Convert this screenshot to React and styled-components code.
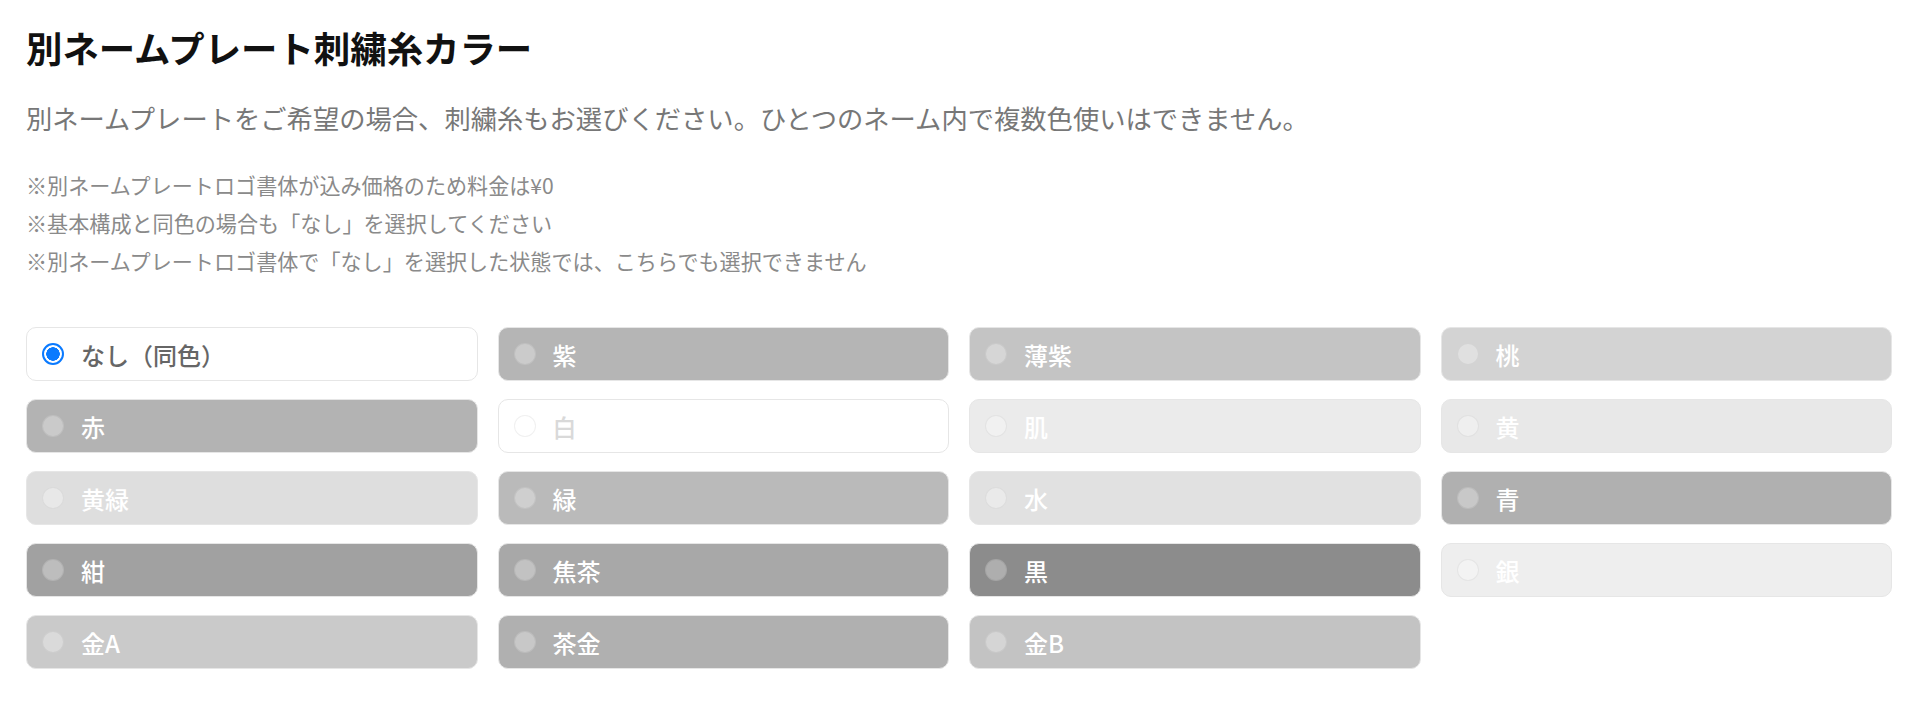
import styled, { createGlobalStyle } from "styled-components";

const GlobalStyle = createGlobalStyle`
  body {
    margin: 0;
    background: #fff;
    font-family: "Noto Sans CJK JP", "Noto Sans", sans-serif;
  }
`;

const Page = styled.div`
  padding: 22px 28px 30px 26px;
`;

const Title = styled.h2`
  margin: 0;
  font-size: 36.4px;
  line-height: 50px;
  font-weight: 700;
  color: #111;
`;

const Lead = styled.p`
  margin: 26px 0 0;
  font-size: 26.3px;
  line-height: 40px;
  color: #777;
`;

const Notes = styled.div`
  margin-top: 28px;
  font-size: 21.1px;
  line-height: 38px;
  color: #8a8a8a;
`;

const Grid = styled.div`
  margin-top: 47px;
  display: grid;
  grid-template-columns: repeat(4, 1fr);
  column-gap: 20px;
  row-gap: 18px;
`;

const Option = styled.label`
  height: 54px;
  box-sizing: border-box;
  display: flex;
  align-items: center;
  gap: 17px;
  padding-left: 15px;
  border: 1px solid #e6e6e6;
  border-radius: 10px;
  background: ${(p) => p.$bg};
  color: ${(p) => p.$fg};
  font-size: 24px;
  font-weight: 500;
`;

const Dot = styled.span`
  width: 22px;
  height: 22px;
  box-sizing: border-box;
  border-radius: 50%;
  flex: none;
  background: rgba(255, 255, 255, 0.3);
  border: 1px solid rgba(0, 0, 0, 0.06);
`;

const Checked = styled.span`
  width: 22px;
  height: 22px;
  box-sizing: border-box;
  border-radius: 50%;
  flex: none;
  border: 2px solid #0a7aff;
  background: radial-gradient(circle, #0a7aff 0 6.5px, #fff 7px);
`;

const options = [
  { name: "なし（同色）", bg: "#fff", fg: "#666", selected: true },
  { name: "紫", bg: "#b5b5b5" },
  { name: "薄紫", bg: "#c4c4c4" },
  { name: "桃", bg: "#d3d3d3" },
  { name: "赤", bg: "#b3b3b3" },
  { name: "白", bg: "#fff", fg: "#d9d9d9" },
  { name: "肌", bg: "#ebebeb" },
  { name: "黄", bg: "#e8e8e8" },
  { name: "黄緑", bg: "#dedede" },
  { name: "緑", bg: "#bababa" },
  { name: "水", bg: "#e1e1e1" },
  { name: "青", bg: "#b0b0b0" },
  { name: "紺", bg: "#a1a1a1" },
  { name: "焦茶", bg: "#a8a8a8" },
  { name: "黒", bg: "#8c8c8c" },
  { name: "銀", bg: "#eeeeee" },
  { name: "金A", bg: "#cacaca" },
  { name: "茶金", bg: "#b0b0b0" },
  { name: "金B", bg: "#c3c3c3" },
];

export default function App() {
  return (
    <Page>
      <GlobalStyle />
      <Title>別ネームプレート刺繍糸カラー</Title>
      <Lead>
        別ネームプレートをご希望の場合、刺繍糸もお選びください。ひとつのネーム内で複数色使いはできません。
      </Lead>
      <Notes>
        <div>※別ネームプレートロゴ書体が込み価格のため料金は¥0</div>
        <div>※基本構成と同色の場合も「なし」を選択してください</div>
        <div>※別ネームプレートロゴ書体で「なし」を選択した状態では、こちらでも選択できません</div>
      </Notes>
      <Grid>
        {options.map((o) => (
          <Option key={o.name} $bg={o.bg} $fg={o.fg || "#fff"}>
            {o.selected ? <Checked /> : <Dot />}
            {o.name}
          </Option>
        ))}
      </Grid>
    </Page>
  );
}
